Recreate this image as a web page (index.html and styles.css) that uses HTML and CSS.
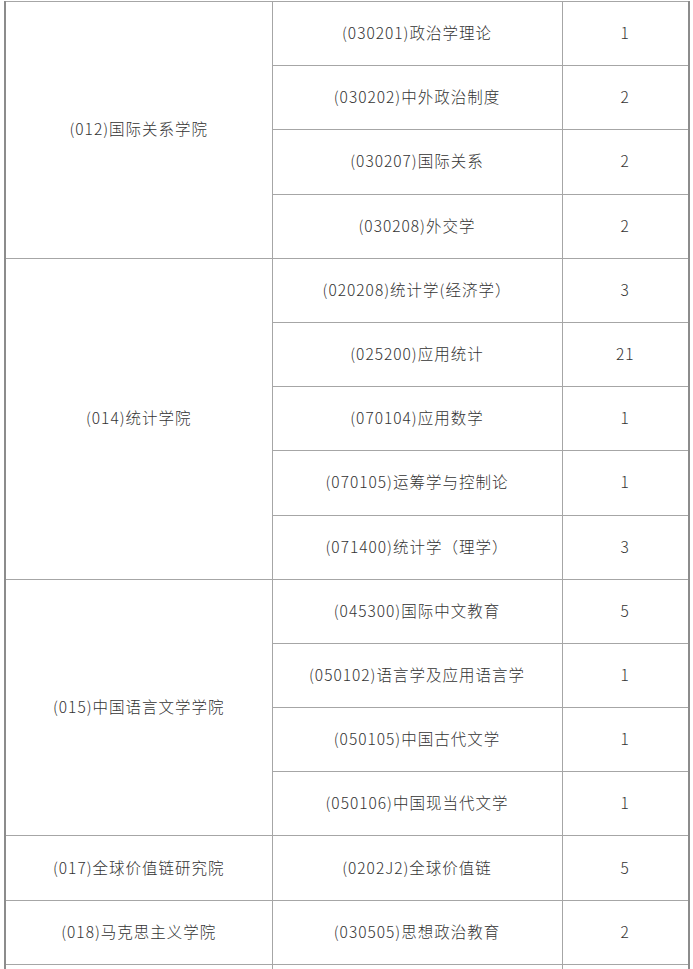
FILE: index.html
```html
<!DOCTYPE html>
<html lang="zh-CN">
<head>
<meta charset="utf-8">
<title>招生专业</title>
<link rel="stylesheet" href="styles.css">
</head>
<body>
<table class="plan">
  <colgroup>
    <col class="c-school">
    <col class="c-major">
    <col class="c-num">
  </colgroup>
  <tbody>
    <tr><td rowspan="4">(012)国际关系学院</td><td>(030201)政治学理论</td><td>1</td></tr>
    <tr><td>(030202)中外政治制度</td><td>2</td></tr>
    <tr><td>(030207)国际关系</td><td>2</td></tr>
    <tr><td>(030208)外交学</td><td>2</td></tr>
    <tr><td rowspan="5">(014)统计学院</td><td>(020208)统计学(经济学）</td><td>3</td></tr>
    <tr><td>(025200)应用统计</td><td>21</td></tr>
    <tr><td>(070104)应用数学</td><td>1</td></tr>
    <tr><td>(070105)运筹学与控制论</td><td>1</td></tr>
    <tr><td>(071400)统计学（理学）</td><td>3</td></tr>
    <tr><td rowspan="4">(015)中国语言文学学院</td><td>(045300)国际中文教育</td><td>5</td></tr>
    <tr><td>(050102)语言学及应用语言学</td><td>1</td></tr>
    <tr><td>(050105)中国古代文学</td><td>1</td></tr>
    <tr><td>(050106)中国现当代文学</td><td>1</td></tr>
    <tr><td>(017)全球价值链研究院</td><td>(0202J2)全球价值链</td><td>5</td></tr>
    <tr><td>(018)马克思主义学院</td><td>(030505)思想政治教育</td><td>2</td></tr>
    <tr><td></td><td></td><td></td></tr>
  </tbody>
</table>
</body>
</html>
```

FILE: styles.css
```css
html, body {
  margin: 0;
  padding: 0;
  background: #ffffff;
}

body {
  padding: 1px 0 0 4px;
  overflow: hidden;
}

.plan {
  border-collapse: collapse;
  width: 684px;
  table-layout: fixed;
  border-left: 2px solid #8c8c8c;
  border-right: 2px solid #8c8c8c;
  font-family: "Noto Sans CJK SC", "Noto Sans", sans-serif;
  font-size: 15.5px;
  letter-spacing: 1px;
  font-weight: 300;
  color: #333333;
}

.c-school { width: 267px; }
.c-major { width: 290px; }
.c-num { width: 127px; }

.plan td {
  border: 1px solid #a6a6a6;
  height: 60.2px;
  padding: 0 0 3px 0;
  text-align: center;
  vertical-align: middle;
  line-height: 20px;
}
```
